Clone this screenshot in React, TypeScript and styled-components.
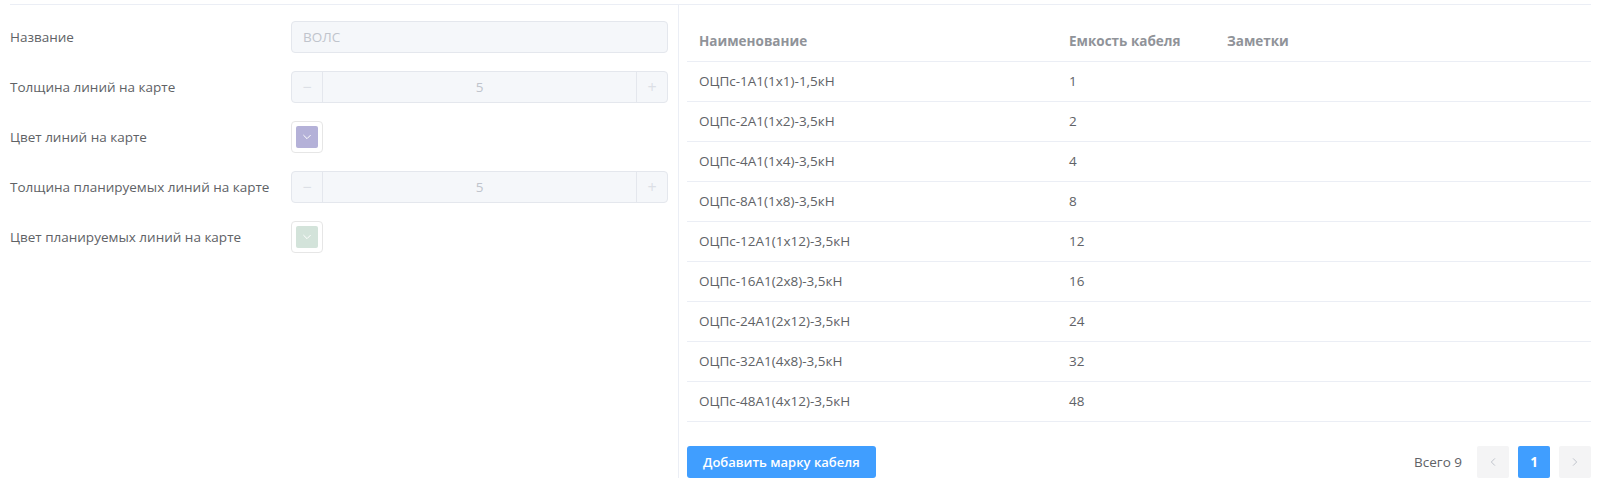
import React from "react";
import styled, { createGlobalStyle } from "styled-components";

const Global = createGlobalStyle`
  html, body { margin: 0; padding: 0; background: #fff; }
  body { font-family: "Open Sans", "Noto Sans", "Liberation Sans", sans-serif; font-size: 13px; color: #606266; }
  * { box-sizing: border-box; }
`;

const Page = styled.div`
  padding-top: 4px;
  padding-left: 10px;
  padding-right: 13px;
`;

const Frame = styled.div`
  border-top: 1px solid #ebeef5;
  display: grid;
  grid-template-columns: 668px 1fr;
  height: 474px;
`;

const FormPanel = styled.div`
  padding: 16px 10px 0 0;
  display: flex;
  flex-direction: column;
  gap: 18px;
`;

const FormRow = styled.div`
  display: grid;
  grid-template-columns: 281px 1fr;
  align-items: center;
  height: 32px;
`;

const Label = styled.label`
  font-size: 13.5px;
  color: #606266;
  white-space: nowrap;
`;

const TextInput = styled.div`
  height: 32px;
  border: 1px solid #e4e7ed;
  border-radius: 4px;
  background: #f5f7fa;
  color: #c0c4cc;
  padding: 0 11px;
  display: flex;
  align-items: center;
  font-size: 13.5px;
`;

const Stepper = styled.div`
  height: 32px;
  border: 1px solid #e4e7ed;
  border-radius: 4px;
  background: #f5f7fa;
  display: grid;
  grid-template-columns: 31px 1fr 31px;
  color: #c0c4cc;
`;

const StepBtn = styled.span<{ $side: "left" | "right" }>`
  display: flex;
  align-items: center;
  justify-content: center;
  color: #dcdfe6;
  font-size: 16px;
  ${(p) => (p.$side === "left" ? "border-right: 1px solid #e4e7ed;" : "border-left: 1px solid #e4e7ed;")}
`;

const StepValue = styled.span`
  display: flex;
  align-items: center;
  justify-content: center;
  font-size: 13.5px;
  color: #c0c4cc;
`;

const ColorTrigger = styled.div`
  width: 32px;
  height: 32px;
  border: 1px solid #e6e6e6;
  border-radius: 4px;
  padding: 4px;
  background: #fff;
`;

const ColorSwatch = styled.div<{ $color: string }>`
  width: 100%;
  height: 100%;
  border-radius: 2px;
  background: ${(p) => p.$color};
  display: flex;
  align-items: center;
  justify-content: center;
`;

const TablePanel = styled.div`
  border-left: 1px solid #ebeef5;
  padding: 16px 0 0 8px;
  display: flex;
  flex-direction: column;
`;

const Table = styled.table`
  width: 100%;
  border-collapse: collapse;
  table-layout: fixed;
`;

const Th = styled.th<{ $w?: number }>`
  ${(p) => (p.$w ? `width: ${p.$w}px;` : "")}
  height: 40px;
  padding: 0 12px;
  text-align: left;
  font-weight: 700;
  font-size: 13.5px;
  color: #909399;
  border-bottom: 1px solid #ebeef5;
`;

const Td = styled.td`
  height: 40px;
  padding: 0 12px;
  font-size: 13.5px;
  color: #606266;
  border-bottom: 1px solid #ebeef5;
  white-space: nowrap;
`;

const Footer = styled.div`
  margin-top: 24px;
  display: flex;
  align-items: center;
  justify-content: space-between;
`;

const PrimaryButton = styled.button`
  height: 32px;
  padding: 0 16px;
  border: none;
  border-radius: 3px;
  background: #409eff;
  color: #fff;
  font-family: inherit;
  font-size: 13px;
  font-weight: 600;
  cursor: pointer;
`;

const Pagination = styled.div`
  display: flex;
  align-items: center;
  gap: 9px;
`;

const Total = styled.span`
  font-size: 13.5px;
  color: #606266;
  margin-right: 6px;
`;

const PageBtn = styled.button<{ $active?: boolean }>`
  width: 32px;
  height: 32px;
  border: none;
  border-radius: 2px;
  padding: 0;
  display: flex;
  align-items: center;
  justify-content: center;
  font-family: inherit;
  font-size: 13.5px;
  font-weight: 700;
  background: ${(p) => (p.$active ? "#409eff" : "#f4f4f5")};
  color: ${(p) => (p.$active ? "#fff" : "#c0c4cc")};
`;

const Chevron = ({ dir }: { dir: "down" | "left" | "right" }) => {
  const d =
    dir === "down" ? "M2 4 L6 8 L10 4" : dir === "left" ? "M8 2 L4 6 L8 10" : "M4 2 L8 6 L4 10";
  return (
    <svg width="10" height="10" viewBox="0 0 12 12" fill="none">
      <path d={d} stroke="currentColor" strokeWidth="1.2" strokeLinecap="round" strokeLinejoin="round" />
    </svg>
  );
};

const WhiteChevron = styled.span`
  color: #fff;
  display: flex;
`;

const rows = [
  ["ОЦПс-1А1(1х1)-1,5кН", "1"],
  ["ОЦПс-2А1(1х2)-3,5кН", "2"],
  ["ОЦПс-4А1(1х4)-3,5кН", "4"],
  ["ОЦПс-8А1(1х8)-3,5кН", "8"],
  ["ОЦПс-12А1(1х12)-3,5кН", "12"],
  ["ОЦПс-16А1(2х8)-3,5кН", "16"],
  ["ОЦПс-24А1(2х12)-3,5кН", "24"],
  ["ОЦПс-32А1(4х8)-3,5кН", "32"],
  ["ОЦПс-48А1(4х12)-3,5кН", "48"],
];

const NumberField = () => (
  <Stepper>
    <StepBtn $side="left">−</StepBtn>
    <StepValue>5</StepValue>
    <StepBtn $side="right">+</StepBtn>
  </Stepper>
);

const ColorField = ({ color }: { color: string }) => (
  <ColorTrigger>
    <ColorSwatch $color={color}>
      <WhiteChevron>
        <Chevron dir="down" />
      </WhiteChevron>
    </ColorSwatch>
  </ColorTrigger>
);

export default function App() {
  return (
    <>
      <Global />
      <Page>
        <Frame>
          <FormPanel>
            <FormRow>
              <Label>Название</Label>
              <TextInput>ВОЛС</TextInput>
            </FormRow>
            <FormRow>
              <Label>Толщина линий на карте</Label>
              <NumberField />
            </FormRow>
            <FormRow>
              <Label>Цвет линий на карте</Label>
              <ColorField color="#b4b1d8" />
            </FormRow>
            <FormRow>
              <Label>Толщина планируемых линий на карте</Label>
              <NumberField />
            </FormRow>
            <FormRow>
              <Label>Цвет планируемых линий на карте</Label>
              <ColorField color="#d3e3da" />
            </FormRow>
          </FormPanel>
          <TablePanel>
            <Table>
              <thead>
                <tr>
                  <Th $w={370}>Наименование</Th>
                  <Th $w={158}>Емкость кабеля</Th>
                  <Th>Заметки</Th>
                </tr>
              </thead>
              <tbody>
                {rows.map(([name, cap]) => (
                  <tr key={name}>
                    <Td>{name}</Td>
                    <Td>{cap}</Td>
                    <Td></Td>
                  </tr>
                ))}
              </tbody>
            </Table>
            <Footer>
              <PrimaryButton>Добавить марку кабеля</PrimaryButton>
              <Pagination>
                <Total>Всего 9</Total>
                <PageBtn>
                  <Chevron dir="left" />
                </PageBtn>
                <PageBtn $active>1</PageBtn>
                <PageBtn>
                  <Chevron dir="right" />
                </PageBtn>
              </Pagination>
            </Footer>
          </TablePanel>
        </Frame>
      </Page>
    </>
  );
}
